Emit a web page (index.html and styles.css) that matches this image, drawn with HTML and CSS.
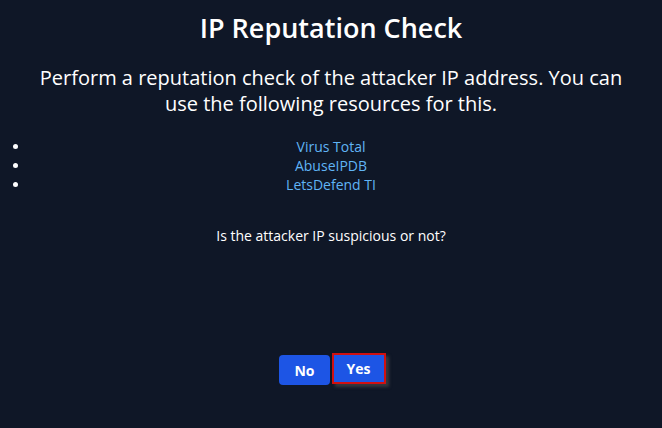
FILE: index.html
```html
<!DOCTYPE html>
<html>
<head>
<meta charset="utf-8">
<link rel="stylesheet" href="styles.css">
</head>
<body>
<main class="page">
  <h1 class="title">IP Reputation Check</h1>
  <p class="lead">Perform a reputation check of the attacker IP address. You can use the following resources for this.</p>
  <ul class="links">
    <li><a href="#">Virus Total</a></li>
    <li><a href="#">AbuseIPDB</a></li>
    <li><a href="#">LetsDefend TI</a></li>
  </ul>
  <p class="question">Is the attacker IP suspicious or not?</p>
  <div class="actions">
    <button class="btn">No</button>
    <button class="btn btn-selected">Yes</button>
  </div>
</main>
</body>
</html>
```

FILE: styles.css
```css
html, body {
  margin: 0;
  padding: 0;
  background: #0f1727;
  height: 100%;
}
body {
  font-family: "Open Sans", "Noto Sans", sans-serif;
  color: #ffffff;
}
.page {
  display: flex;
  flex-direction: column;
  align-items: stretch;
  text-align: center;
  padding-top: 11px;
}
.title {
  margin: 0;
  font-size: 27px;
  font-weight: 600;
  line-height: 34px;
}
.lead {
  margin: 20px 30px 0;
  font-size: 20px;
  line-height: 26px;
}
.links {
  margin: 20px 30px 0;
  padding: 0;
  font-size: 14px;
  line-height: 19px;
}
.links a {
  color: #60b4f5;
  text-decoration: none;
}
.question {
  margin: 32px 0 0;
  font-size: 14px;
  line-height: 19px;
}
.actions {
  display: flex;
  justify-content: center;
  align-items: flex-start;
  gap: 2px;
  margin-top: 108px;
  padding-left: 3px;
}
.btn {
  font-family: inherit;
  font-size: 14px;
  font-weight: 700;
  color: #fff;
  background: #1d55e5;
  border: 0;
  border-radius: 4px;
  height: 30px;
  padding: 0 15px;
  margin-top: 2px;
}
.btn-selected {
  margin-top: 0;
  height: 31px;
  border: 2px solid #d01010;
  border-radius: 0;
  padding: 0 13px;
  box-shadow: 3px 3px 3px rgba(80, 80, 80, 0.6);
}
```
